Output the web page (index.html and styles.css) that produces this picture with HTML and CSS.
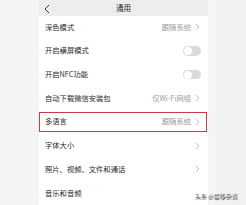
FILE: index.html
```html
<!DOCTYPE html>
<html lang="zh">
<head>
<meta charset="utf-8">
<link rel="stylesheet" href="styles.css">
</head>
<body>
<div class="page">
  <div class="gutter left"></div>
  <div class="phone">
    <div class="header">
      <svg class="back" width="6" height="10" viewBox="0 0 6 10"><path d="M5 1 L1 5 L5 9" fill="none" stroke="#333" stroke-width="1"/></svg>
      <span class="title">通用</span>
    </div>
    <div class="list">
      <div class="row"><span class="label">深色模式</span><span class="value">跟随系统</span><svg class="chev" width="5" height="8" viewBox="0 0 5 8"><path d="M1 1 L4 4 L1 7" fill="none" stroke="#bbb" stroke-width="0.9"/></svg></div>
      <div class="row"><span class="label">开启横屏模式</span><span class="toggle"><span class="knob"></span></span></div>
      <div class="row"><span class="label">开启NFC功能</span><span class="toggle"><span class="knob"></span></span></div>
      <div class="row"><span class="label">自动下载微信安装包</span><span class="value">仅Wi-Fi网络</span><svg class="chev" width="5" height="8" viewBox="0 0 5 8"><path d="M1 1 L4 4 L1 7" fill="none" stroke="#bbb" stroke-width="0.9"/></svg></div>
      <div class="row hl"><span class="label">多语言</span><span class="value">跟随系统</span><svg class="chev" width="5" height="8" viewBox="0 0 5 8"><path d="M1 1 L4 4 L1 7" fill="none" stroke="#bbb" stroke-width="0.9"/></svg></div>
      <div class="row"><span class="label">字体大小</span><svg class="chev" width="5" height="8" viewBox="0 0 5 8"><path d="M1 1 L4 4 L1 7" fill="none" stroke="#bbb" stroke-width="0.9"/></svg></div>
      <div class="row"><span class="label">照片、视频、文件和通话</span><svg class="chev" width="5" height="8" viewBox="0 0 5 8"><path d="M1 1 L4 4 L1 7" fill="none" stroke="#bbb" stroke-width="0.9"/></svg></div>
      <div class="row"><span class="label">音乐和音频</span></div>
    </div>
  </div>
  <div class="gutter right"></div>
  <div class="watermark">头条 @晨哆杂谈</div>
</div>
</body>
</html>
```
FILE: styles.css
```css
html, body {
  margin: 0;
  padding: 0;
  width: 246px;
  height: 205px;
  overflow: hidden;
  background: #f3f3f3;
  font-family: "Noto Sans CJK SC", "Noto Sans", sans-serif;
}
.page {
  position: relative;
  display: flex;
  width: 246px;
  height: 205px;
}
.gutter.left {
  width: 39px;
  background: #f4f4f4;
}
.gutter.right {
  flex: 1;
  background: linear-gradient(to right, #f5f5f5 0, #f5f5f5 8px, #f1f1f1 8px);
}
.phone {
  width: 169px;
  display: flex;
  flex-direction: column;
  background: #fff;
}
.header {
  height: 19px;
  background: #ededed;
  display: flex;
  align-items: center;
  justify-content: center;
  position: relative;
}
.back {
  position: absolute;
  left: 5px;
  top: 4px;
}
.title {
  font-size: 7.5px;
  color: #222;
  line-height: 1;
}
.list {
  display: flex;
  flex-direction: column;
  background: #fff;
}
.row {
  height: 23.7px;
  display: flex;
  align-items: center;
  padding: 0 8px 0 6px;
  box-sizing: border-box;
  font-size: 7.3px;
  line-height: 1;
  color: #2a2a2a;
  position: relative;
}
.label {
  flex: 1;
}
.value {
  color: #999;
  margin-right: 4px;
}
.chev {
  display: block;
}
.toggle {
  width: 18px;
  height: 9.5px;
  border-radius: 5px;
  background: #dadada;
  position: relative;
  margin-right: -1px;
}
.knob {
  position: absolute;
  left: 0.8px;
  top: 0.8px;
  width: 8px;
  height: 8px;
  border-radius: 50%;
  background: #fff;
}
.row.hl::after {
  content: "";
  position: absolute;
  left: 0;
  right: 1px;
  top: 2px;
  bottom: 2px;
  border: 1.5px solid #cf3b45;
  box-sizing: border-box;
}
.watermark {
  position: absolute;
  left: 195px;
  top: 194px;
  font-size: 6px;
  color: #4a4a4a;
  line-height: 1;
  white-space: nowrap;
}
```
